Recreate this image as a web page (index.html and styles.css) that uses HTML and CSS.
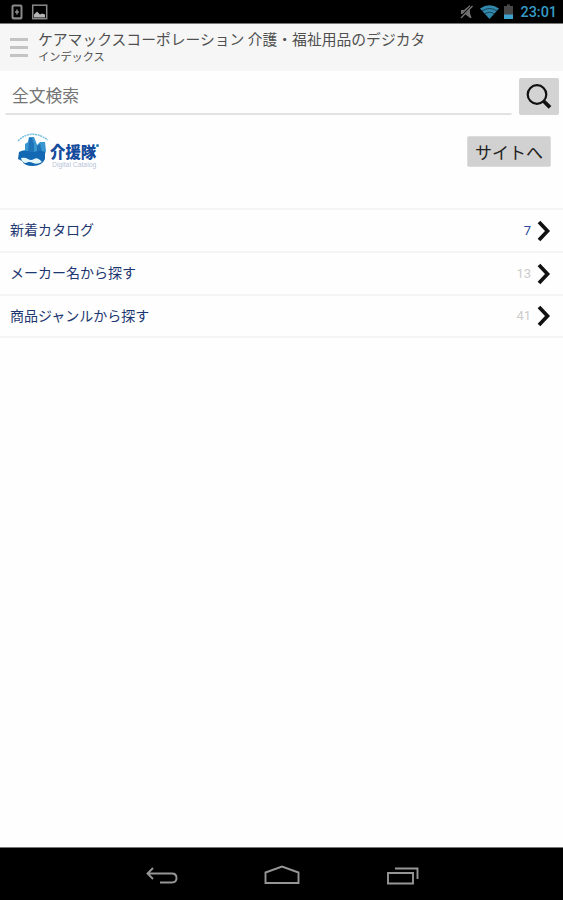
FILE: index.html
```html
<!DOCTYPE html>
<html lang="ja">
<head>
<meta charset="utf-8">
<title>インデックス</title>
<link rel="stylesheet" href="styles.css">
</head>
<body>
<div class="statusbar">
  <svg class="notices" width="38" height="18" viewBox="0 0 38 18" fill="none" stroke="#8a8a8a">
    <rect x="2.500" y="1.500" width="9" height="13" rx="1" stroke-width="2"/>
    <path d="M2.500 14.200h9M7 5.500v5M5 8h4" stroke-width="1.500"/>
    <rect x="22.700" y="1.200" width="14" height="13.500" stroke-width="1.500"/>
    <path d="M24 13.500v-3l3-3 3 3 2-1 3 1v3z" fill="#b5b5b5" stroke="none"/>
  </svg>
  <div class="status">
    <svg width="54" height="18" viewBox="0 0 54 18">
      <path d="M1 6h3l6-5v13l-5-4H1z" fill="#707070"/>
      <path d="M0 14 12 2" stroke="#000" stroke-width="2"/>
      <path d="M1 14 12.500 2M9 9l2 5" stroke="#777" stroke-width="1.300"/>
      <path d="M20 4.500Q29.500-2 39 4.500L29.500 15z" fill="#3187ac"/>
      <path d="M22 7q7.500-5 15 0M24.500 10q5-3.500 10 0" fill="none" stroke="#0a2835" stroke-width=".7"/>
      <path d="M44 2h3V.500h3V2h3v9h-9z" fill="#484848"/>
      <path d="M44 10.500h9v4.500h-9z" fill="#3da3cd"/>
    </svg>
    <span class="clock">23:01</span>
  </div>
</div>
<header class="appbar">
  <div class="menu"><i></i><i></i><i></i></div>
  <div>
    <h1 class="title">ケアマックスコーポレーション 介護・福祉用品のデジカタ</h1>
    <p class="subtitle">インデックス</p>
  </div>
</header>
<main class="content">
  <div class="search">
    <div class="field">全文検索</div>
    <div class="search-button">
      <svg width="26" height="26" viewBox="0 0 26 26" fill="none" stroke="#111">
        <circle cx="11" cy="10.500" r="9.300" stroke-width="2.200"/>
        <path d="M17.500 17l6.500 6.300" stroke-width="3.800"/>
      </svg>
    </div>
  </div>
  <div class="brand">
    <div class="logo">
      <svg width="32" height="34" viewBox="0 0 32 34">
        <path d="M1 8Q14-5 31 7" fill="none" stroke="#6fbcdc" stroke-width="1.400" stroke-dasharray="2 .7"/>
        <path d="M4 18l4-1v-6l3-2 1-5h5l2 5 1 3 3-3h5l1 9-1 3H3z" fill="#3a96cf"/>
        <path d="M12 5h3l2 6v8h-6zM20 13l3-2 2 8h-5z" fill="#1f73b8"/>
        <path d="M2 19q4-2 8-1 6 2 10 0 4-1 8 1v7q-3 7-12 7Q7 33 5 28l-4-2z" fill="#1268b3"/>
        <path d="M4 25q4-1 7 1t6 0 6 1l2 2q-5 3-9 1t-7 0q-4 0-5-5z" fill="#e6f7fc"/>
      </svg>
      <div class="logo-words">
        <div class="logo-name">介援隊<i></i></div>
        <div class="logo-tag">Digital Catalog</div>
      </div>
    </div>
    <div class="site-button">サイトへ</div>
  </div>
  <ul class="list">
    <li class="row"><span class="label">新着カタログ</span><span class="count new">7</span><svg class="chevron" width="14" height="22" viewBox="0 0 14 22"><path d="M2 2l8.500 9L2 20" fill="none" stroke="#111" stroke-width="3.700"/></svg></li>
    <li class="row"><span class="label">メーカー名から探す</span><span class="count">13</span><svg class="chevron" width="14" height="22" viewBox="0 0 14 22"><path d="M2 2l8.500 9L2 20" fill="none" stroke="#111" stroke-width="3.700"/></svg></li>
    <li class="row"><span class="label">商品ジャンルから探す</span><span class="count">41</span><svg class="chevron" width="14" height="22" viewBox="0 0 14 22"><path d="M2 2l8.500 9L2 20" fill="none" stroke="#111" stroke-width="3.700"/></svg></li>
  </ul>
</main>
<nav class="navbar">
  <svg width="32" height="18" viewBox="0 0 32 18"><path d="M7 1 1.500 6.500 7 12M2 6.500h24q4.500 0 4.500 4.500t-4.500 4.500H14"/></svg>
  <svg class="home" width="36" height="20" viewBox="0 0 36 20"><path d="M1.500 18V7.500L18 1.500l16.500 6V18z"/></svg>
  <svg width="34" height="18" viewBox="0 0 34 18"><path d="M2 6h25v10.500H2zM9 1.500h22.500V12"/></svg>
</nav>
</body>
</html>
```
FILE: styles.css
```css
* { box-sizing: border-box; }
body {
  margin: 0;
  height: 900px;
  display: flex;
  flex-direction: column;
  overflow: hidden;
  background: #fefefe;
  color: #505050;
  font-family: "Noto Sans CJK JP", sans-serif;
}
.statusbar {
  height: 24px;
  flex: none;
  display: flex;
  justify-content: space-between;
  align-items: flex-start;
  padding: 4px 6px 0 10px;
  background: #000;
  border-bottom: 1px solid #777;
}
.status { display: flex; gap: 6px; }
.clock {
  font: 500 14.4px/18px Roboto, sans-serif;
  color: #359bc5;
}
.appbar {
  height: 47px;
  flex: none;
  display: flex;
  padding: 5px 0 0 10px;
  gap: 10px;
  background: #f6f6f6;
}
.menu {
  width: 18px;
  display: flex;
  flex-direction: column;
  gap: 5px;
  padding-top: 9px;
}
.menu i { height: 3px; background: #c4c4c4; }
.title {
  margin: 0;
  font-size: 14.8px;
  line-height: 20px;
  font-weight: 400;
  white-space: nowrap;
}
.subtitle { margin: 0; font-size: 11.2px; line-height: 15px; }
.content { flex: 1; }
.search {
  display: flex;
  justify-content: space-between;
  padding: 7px 4px 0 5px;
  height: 50px;
}
.field {
  width: 507px;
  height: 37px;
  padding-left: 7px;
  border-bottom: 2px solid #e2e2e2;
  border-radius: 2px;
  color: #747474;
  font-size: 16.8px;
  line-height: 35px;
}
.search-button {
  width: 40px;
  height: 37px;
  display: flex;
  align-items: center;
  justify-content: center;
  background: #d3d3d3;
  border-radius: 2px;
}
.brand {
  height: 87px;
  display: flex;
  justify-content: space-between;
  align-items: flex-start;
  padding: 12px 12px 0 17px;
}
.logo { display: flex; gap: 1px; }
.logo-name {
  display: flex;
  margin-top: 9px;
  color: #144b9c;
  font-size: 15.4px;
  line-height: 18px;
  font-weight: 900;
}
.logo-name i {
  width: 3px;
  height: 3px;
  margin-top: 2px;
  border-radius: 50%;
  background: #2680b8;
}
.logo-tag {
  margin-top: 1px;
  padding-left: 2px;
  color: #b9c5d9;
  font: 6.8px/7px "Liberation Sans", sans-serif;
}
.site-button {
  width: 84px;
  height: 31px;
  margin-top: 3px;
  border: 1px solid #dcdcdc;
  border-radius: 2px;
  background: #d1d1d1;
  color: #222;
  font-size: 17px;
  line-height: 29px;
  text-align: center;
}
.list {
  margin: 0;
  padding: 0;
  list-style: none;
  border-top: 2px solid #f4f4f4;
}
.row {
  height: 43px;
  display: flex;
  align-items: center;
  padding: 0 12px 0 10px;
  border-bottom: 2px solid #f4f4f4;
}
.row:last-child { height: 42px; }
.label {
  flex: 1;
  margin-bottom: 3px;
  color: #1d3771;
  font-size: 14px;
  line-height: 20px;
}
.count {
  margin-right: 6px;
  color: #ccc;
  font: 13px/20px Roboto, sans-serif;
}
.count.new { color: #2d479c; }
.navbar {
  height: 53px;
  flex: none;
  display: flex;
  justify-content: center;
  gap: 86px;
  padding: 19px 0 0 3px;
  background: #000;
  border-top: 1px solid #777;
}
.navbar path { fill: none; stroke: #969696; stroke-width: 1.9; }
.home { margin-top: -2px; }
```
